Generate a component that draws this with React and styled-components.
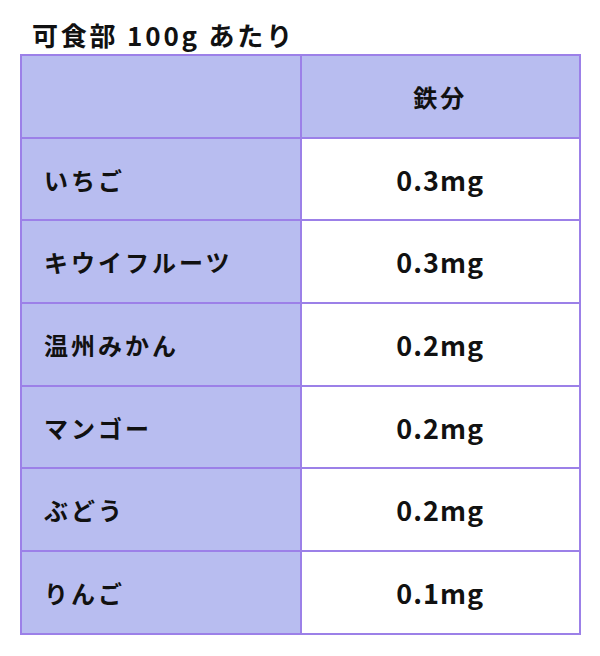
import React from 'react'
import styled, { createGlobalStyle } from 'styled-components'

const GlobalStyle = createGlobalStyle`
  body {
    margin: 0;
    background: #ffffff;
    font-family: "Noto Sans CJK JP", "Noto Sans", sans-serif;
    color: #111111;
  }
`

const rows = [
  { name: 'いちご', iron: '0.3mg' },
  { name: 'キウイフルーツ', iron: '0.3mg' },
  { name: '温州みかん', iron: '0.2mg' },
  { name: 'マンゴー', iron: '0.2mg' },
  { name: 'ぶどう', iron: '0.2mg' },
  { name: 'りんご', iron: '0.1mg' },
]

const IronTable = () => {
  return (
    <Page>
      <GlobalStyle />
      <Caption>可食部 100g あたり</Caption>
      <Table>
        <thead>
          <tr>
            <HeadCell />
            <HeadCell $center>鉄分</HeadCell>
          </tr>
        </thead>
        <tbody>
          {rows.map((r) => (
            <tr key={r.name}>
              <HeadCell>{r.name}</HeadCell>
              <ValueCell>{r.iron}</ValueCell>
            </tr>
          ))}
        </tbody>
      </Table>
    </Page>
  )
}

const Page = styled.div`
  padding: 18px 0 0 20px;
  width: 562px;
`

const Caption = styled.div`
  font-size: 26px;
  font-weight: 700;
  letter-spacing: 2.8px;
  line-height: 34px;
  margin: 0 0 2px 12px;
`

const Table = styled.table`
  width: 561px;
  border-collapse: collapse;
  table-layout: fixed;
  td, th {
    border: 2px solid #9c80e8;
    height: 82.7px;
    padding: 0 22px;
    font-size: 24px;
    font-weight: 700;
    letter-spacing: 3px;
    box-sizing: border-box;
  }
`

const HeadCell = styled.th`
  background: #b8bdf0;
  text-align: ${(p) => (p.$center ? 'center' : 'left')};
  width: 50%;
`

const ValueCell = styled.td`
  background: #ffffff;
  text-align: center;
  font-size: 27px !important;
  letter-spacing: 1px !important;
`

export default IronTable
